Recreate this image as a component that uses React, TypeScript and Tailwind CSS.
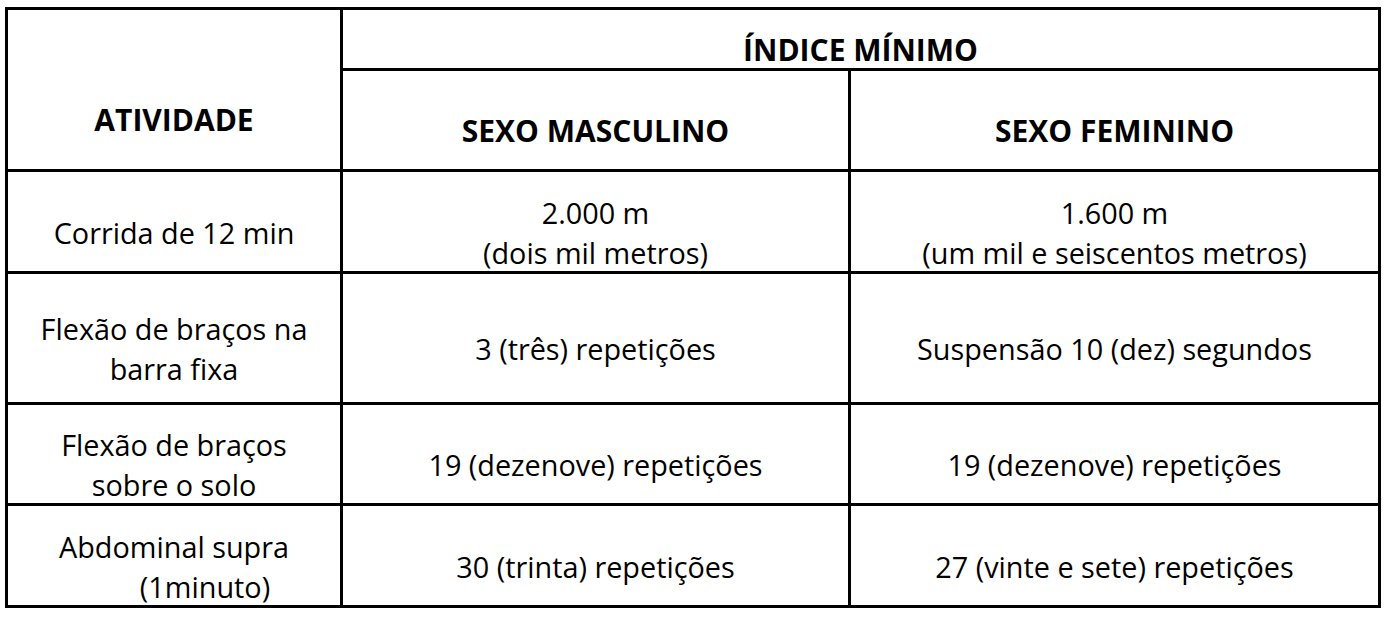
import React from "react"

const cell = "bg-white flex flex-col items-center justify-center text-center"
const head = "text-[30px] font-bold"

export default function App() {
  return (
    <div className="min-h-screen bg-white pl-[5px] pt-[7px]" style={{ fontFamily: '"Open Sans", "Noto Sans", sans-serif' }}>
      <div className="grid w-[1376px] grid-cols-[332px_505px_527px] grid-rows-[58px_98px_99px_128px_98px_99px] gap-[3px] bg-black p-[3px] text-[28.8px] leading-[40px] text-black">
        <div className={`${cell} ${head} row-span-2 pt-[60px]`}>ATIVIDADE</div>
        <div className={`${cell} ${head} col-span-2 pt-[22px]`}>ÍNDICE MÍNIMO</div>
        <div className={`${cell} ${head} pt-[22px]`}>SEXO MASCULINO</div>
        <div className={`${cell} ${head} pt-[22px]`}>SEXO FEMININO</div>

        <div className={`${cell} pt-[22px]`}>Corrida de 12 min</div>
        <div className={`${cell} pt-[22px]`}>
          <span>2.000 m</span>
          <span>(dois mil metros)</span>
        </div>
        <div className={`${cell} pt-[22px]`}>
          <span>1.600 m</span>
          <span>(um mil e seiscentos metros)</span>
        </div>

        <div className={`${cell} pt-[22px]`}>
          <span>Flexão de braços na</span>
          <span>barra fixa</span>
        </div>
        <div className={`${cell} pt-[22px]`}>3 (três) repetições</div>
        <div className={`${cell} pt-[22px]`}>Suspensão 10 (dez) segundos</div>

        <div className={`${cell} pt-[22px]`}>
          <span>Flexão de braços</span>
          <span>sobre o solo</span>
        </div>
        <div className={`${cell} pt-[22px]`}>19 (dezenove) repetições</div>
        <div className={`${cell} pt-[22px]`}>19 (dezenove) repetições</div>

        <div className={`${cell} pt-[22px]`}>
          <span>Abdominal supra</span>
          <span className="pl-[62px]">(1minuto)</span>
        </div>
        <div className={`${cell} pt-[22px]`}>30 (trinta) repetições</div>
        <div className={`${cell} pt-[22px]`}>27 (vinte e sete) repetições</div>
      </div>
    </div>
  )
}
